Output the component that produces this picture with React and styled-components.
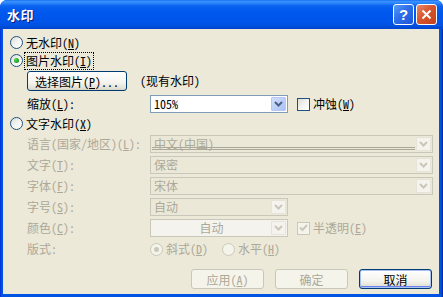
import React from "react";
import styled, { createGlobalStyle } from "styled-components";

const GlobalStyle = createGlobalStyle`
  html, body {
    margin: 0;
    padding: 0;
    background: #ffffff;
  }
  body {
    font-family: "Noto Sans Mono CJK SC", "Noto Sans CJK SC", "Liberation Sans", sans-serif;
    font-size: 12px;
    color: #000;
  }
`;

const DISABLED = "#aca899";

export const Window = styled.div`
  width: 443px;
  height: 297px;
  box-sizing: border-box;
  display: flex;
  flex-direction: column;
  background: linear-gradient(90deg, #0831d9 0, #0054e3 2px, #0054e3 calc(100% - 2px), #001ea0 100%);
  border-radius: 7px 7px 0 0;
  overflow: hidden;
`;

export const TitleBar = styled.div`
  flex: none;
  height: 29px;
  display: flex;
  align-items: center;
  padding: 0 6px 0 7px;
  background: linear-gradient(
    180deg,
    #0a5fe8 0px,
    #3d95ff 1px,
    #2b86fb 3px,
    #0a62ef 6px,
    #0058ee 12px,
    #0055ea 22px,
    #0050de 26px,
    #0046d0 28px
  );
`;

export const Title = styled.span`
  flex: 1;
  color: #fff;
  font-family: "Noto Sans CJK SC", sans-serif;
  font-weight: bold;
  font-size: 13px;
  letter-spacing: 0.5px;
  text-shadow: 1px 1px 0 #0a1883;
`;

export const CaptionButton = styled.div`
  width: 21px;
  height: 21px;
  box-sizing: border-box;
  margin-left: ${(p) => (p.$close ? "2px" : "0")};
  border: 1px solid #fff;
  border-radius: 3px;
  display: flex;
  align-items: center;
  justify-content: center;
  color: #fff;
  font: bold 15px "Liberation Sans", sans-serif;
  background: ${(p) =>
    p.$close
      ? "linear-gradient(135deg, #e8896a 0%, #d8552e 45%, #c2421a 100%)"
      : "linear-gradient(135deg, #5a9bf8 0%, #2d6ee9 45%, #1e56d8 100%)"};
`;

export const Body = styled.div`
  flex: 1;
  margin: 0 4px 3px 3px;
  background: #ece9d8;
  padding: 5px 7px 0 7px;
  display: flex;
  flex-direction: column;
`;

export const Row = styled.div`
  display: flex;
  align-items: center;
  height: ${(p) => p.$h || 17}px;
  margin-top: ${(p) => p.$mt || 0}px;
  padding-left: ${(p) => p.$indent || 0}px;
  gap: ${(p) => p.$gap || 0}px;
  flex: none;
`;

export const FieldGrid = styled.div`
  display: grid;
  grid-template-columns: 123px 138px 1fr;
  grid-auto-rows: 18px;
  row-gap: 3px;
  align-items: center;
  margin-top: ${(p) => p.$mt || 0}px;
  padding-left: 17px;
  flex: none;
`;

export const Label = styled.span`
  color: ${(p) => (p.$disabled ? DISABLED : "#000")};
  white-space: nowrap;
  line-height: 14px;
  ${(p) => (p.$focus ? "outline: 1px dotted #000; outline-offset: 1px;" : "")}
`;

export const Key = styled.u`
  text-underline-offset: 1px;
`;

export const RadioCircle = styled.span`
  width: 13px;
  height: 13px;
  box-sizing: border-box;
  flex: none;
  border-radius: 50%;
  border: 1px solid ${(p) => (p.$disabled ? "#cac8bb" : "#1c5180")};
  background: ${(p) =>
    p.$disabled ? "#f5f4ea" : "linear-gradient(135deg, #dcdcd7 0%, #f5f5f3 55%, #ffffff 100%)"};
  display: flex;
  align-items: center;
  justify-content: center;
  margin-right: 3px;

  &::after {
    content: "";
    display: ${(p) => (p.$checked ? "block" : "none")};
    width: 5px;
    height: 5px;
    border-radius: 50%;
    background: ${(p) =>
      p.$disabled ? "#cac8bb" : "radial-gradient(circle at 35% 35%, #55d955 0%, #21a121 60%, #1a8a1a 100%)"};
  }
`;

export const CheckBox = styled.span`
  width: 13px;
  height: 13px;
  box-sizing: border-box;
  flex: none;
  border: 1px solid ${(p) => (p.$disabled ? "#cac8bb" : "#1c5180")};
  background: ${(p) =>
    p.$disabled ? "#f5f4ea" : "linear-gradient(135deg, #dcdcd7 0%, #f5f5f3 55%, #ffffff 100%)"};
  display: flex;
  align-items: center;
  justify-content: center;
  margin-right: 3px;
`;

export const PushButton = styled.div`
  box-sizing: border-box;
  width: ${(p) => p.$w || 73}px;
  height: 20px;
  flex: none;
  display: flex;
  align-items: center;
  justify-content: center;
  border: 1px solid ${(p) => (p.$disabled ? "#c9c7ba" : "#003c74")};
  border-radius: 3px;
  color: ${(p) => (p.$disabled ? DISABLED : "#000")};
  background: ${(p) =>
    p.$disabled ? "#f5f4ea" : "linear-gradient(180deg, #ffffff 0%, #f4f3ee 60%, #e3e0d4 90%, #d6d0c5 100%)"};
  box-shadow: ${(p) => (p.$default ? "inset 0 0 0 1px #a9c2ef, inset 0 -1px 0 1px #6982ee" : "none")};
  white-space: nowrap;
`;

export const Combo = styled.div`
  box-sizing: border-box;
  position: relative;
  width: ${(p) => p.$w}px;
  height: 18px;
  grid-column: ${(p) => (p.$wide ? "2 / 4" : "auto")};
  display: flex;
  align-items: center;
  padding: 0 1px 0 ${(p) => (p.$center ? 1 : 3)}px;
  border: 1px solid ${(p) => (p.$disabled ? "#c9c7ba" : "#7f9db9")};
  background: ${(p) => (p.$disabled ? (p.$light ? "#f4f3ee" : "#ebe8d7") : "#fff")};
  color: ${(p) => (p.$disabled ? DISABLED : "#000")};
  white-space: nowrap;
`;

export const ComboText = styled.span`
  flex: 1;
  text-align: ${(p) => (p.$center ? "center" : "left")};
  line-height: 14px;
`;

export const DoubleRule = styled.span`
  position: absolute;
  left: 1px;
  right: 17px;
  bottom: 2px;
  height: 1px;
  border-top: 1px solid #aca899;
  border-bottom: 1px solid #aca899;
`;

export const DropButton = styled.span`
  box-sizing: border-box;
  width: 15px;
  height: 14px;
  flex: none;
  display: flex;
  align-items: center;
  justify-content: center;
  border-radius: 1px;
  border: 1px solid ${(p) => (p.$disabled ? "#e6e4d8" : "#b6c8f4")};
  background: ${(p) =>
    p.$disabled ? "#f4f3ee" : "linear-gradient(135deg, #d2dffb 0%, #b9cdf8 60%, #a8c0f4 100%)"};
`;

export const CheckField = styled.div`
  display: flex;
  align-items: center;
  padding-left: 9px;
`;

export const ButtonBar = styled.div`
  display: flex;
  justify-content: flex-end;
  gap: 11px;
  margin-top: 11px;
  flex: none;
`;

function Chevron({ color }) {
  return (
    <svg width="9" height="6" viewBox="0 0 9 6">
      <path d="M1 1 L4.5 4.5 L8 1" fill="none" stroke={color} strokeWidth="2" />
    </svg>
  );
}

function Radio({ checked, disabled, children, focus }) {
  return (
    <>
      <RadioCircle $checked={checked} $disabled={disabled} />
      <Label $disabled={disabled} $focus={focus}>
        {children}
      </Label>
    </>
  );
}

function Check({ checked, disabled, children }) {
  return (
    <CheckField>
      <CheckBox $disabled={disabled}>
        {checked && (
          <svg width="9" height="8" viewBox="0 0 9 8">
            <path d="M1 3.5 L3.5 6 L8 1" fill="none" stroke={disabled ? "#cac8bb" : "#21a121"} strokeWidth="2" />
          </svg>
        )}
      </CheckBox>
      <Label $disabled={disabled}>{children}</Label>
    </CheckField>
  );
}

function Select({ value, w, wide, disabled, center, light, rule }) {
  return (
    <Combo $w={w} $wide={wide} $disabled={disabled} $center={center} $light={light}>
      <ComboText $center={center}>{value}</ComboText>
      {rule && <DoubleRule />}
      <DropButton $disabled={disabled}>
        <Chevron color={disabled ? "#c9c7ba" : "#4d6185"} />
      </DropButton>
    </Combo>
  );
}

export default function App() {
  return (
    <>
      <GlobalStyle />
      <Window>
        <TitleBar>
          <Title>水印</Title>
          <CaptionButton>?</CaptionButton>
          <CaptionButton $close>
            <svg width="11" height="11" viewBox="0 0 11 11">
              <path d="M1.5 1.5 L9.5 9.5 M9.5 1.5 L1.5 9.5" stroke="#fff" strokeWidth="2" />
            </svg>
          </CaptionButton>
        </TitleBar>
        <Body>
          <Row>
            <Radio>
              无水印(<Key>N</Key>)
            </Radio>
          </Row>
          <Row $mt={1}>
            <Radio checked focus>
              图片水印(<Key>I</Key>)
            </Radio>
          </Row>
          <Row $h={20} $mt={2} $indent={17} $gap={13}>
            <PushButton $w={100}>
              选择图片(<Key>P</Key>)...
            </PushButton>
            <Label>(现有水印)</Label>
          </Row>
          <FieldGrid $mt={4}>
            <Label>
              缩放(<Key>L</Key>):
            </Label>
            <Select value="105%" w={138} />
            <Check>
              冲蚀(<Key>W</Key>)
            </Check>
          </FieldGrid>
          <Row $mt={2}>
            <Radio>
              文字水印(<Key>X</Key>)
            </Radio>
          </Row>
          <FieldGrid $mt={3}>
            <Label $disabled>
              语言(国家/地区)(<Key>L</Key>):
            </Label>
            <Select value="中文(中国)" w={283} wide disabled rule />
            <Label $disabled>
              文字(<Key>T</Key>):
            </Label>
            <Select value="保密" w={283} wide disabled />
            <Label $disabled>
              字体(<Key>F</Key>):
            </Label>
            <Select value="宋体" w={283} wide disabled />
            <Label $disabled>
              字号(<Key>S</Key>):
            </Label>
            <Select value="自动" w={138} disabled />
            <span />
            <Label $disabled>
              颜色(<Key>C</Key>):
            </Label>
            <Select value="自动" w={138} disabled center light />
            <Check checked disabled>
              半透明(<Key>E</Key>)
            </Check>
          </FieldGrid>
          <FieldGrid $mt={3}>
            <Label $disabled>版式:</Label>
            <Row $gap={0}>
              <Radio checked disabled>
                斜式(<Key>D</Key>)
              </Radio>
              <span style={{ width: 14 }} />
              <Radio disabled>
                水平(<Key>H</Key>)
              </Radio>
            </Row>
          </FieldGrid>
          <ButtonBar>
            <PushButton $disabled>
              应用(<Key>A</Key>)
            </PushButton>
            <PushButton $disabled>确定</PushButton>
            <PushButton $default>取消</PushButton>
          </ButtonBar>
        </Body>
      </Window>
    </>
  );
}
